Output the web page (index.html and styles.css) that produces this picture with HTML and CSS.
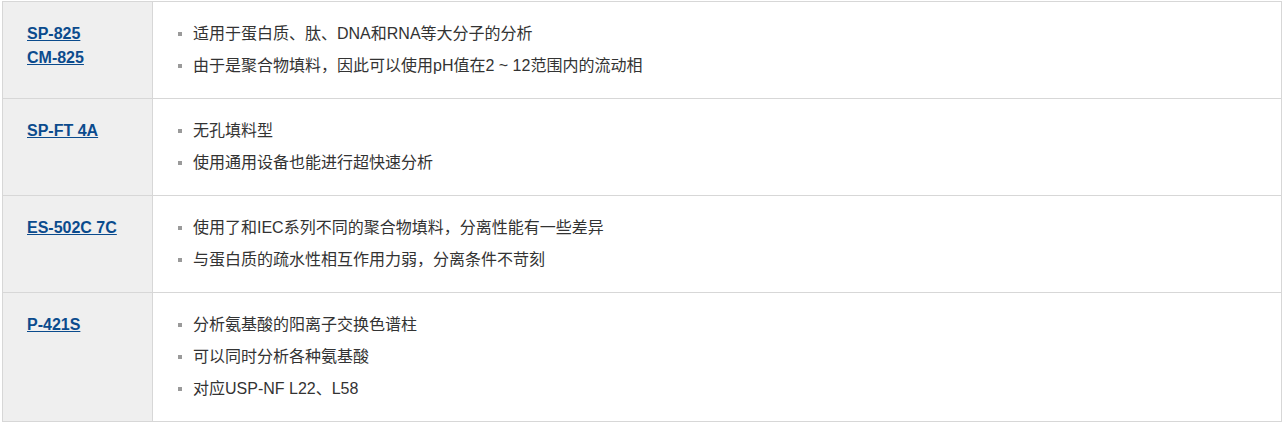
FILE: index.html
```html
<!DOCTYPE html>
<html lang="zh-CN">
<head>
<meta charset="utf-8">
<title>Columns</title>
<link rel="stylesheet" href="styles.css">
</head>
<body>
<div class="spec-table">
  <div class="name-cell">
    <a class="model" href="#">SP-825</a><br>
    <a class="model" href="#">CM-825</a>
  </div>
  <div class="desc-cell">
    <ul class="features">
      <li>适用于蛋白质、肽、DNA和RNA等大分子的分析</li>
      <li>由于是聚合物填料，因此可以使用pH值在2 ~ 12范围内的流动相</li>
    </ul>
  </div>

  <div class="name-cell">
    <a class="model" href="#">SP-FT 4A</a>
  </div>
  <div class="desc-cell">
    <ul class="features">
      <li>无孔填料型</li>
      <li>使用通用设备也能进行超快速分析</li>
    </ul>
  </div>

  <div class="name-cell">
    <a class="model" href="#">ES-502C 7C</a>
  </div>
  <div class="desc-cell">
    <ul class="features">
      <li>使用了和IEC系列不同的聚合物填料，分离性能有一些差异</li>
      <li>与蛋白质的疏水性相互作用力弱，分离条件不苛刻</li>
    </ul>
  </div>

  <div class="name-cell">
    <a class="model" href="#">P-421S</a>
  </div>
  <div class="desc-cell">
    <ul class="features">
      <li>分析氨基酸的阳离子交换色谱柱</li>
      <li>可以同时分析各种氨基酸</li>
      <li>对应USP-NF L22、L58</li>
    </ul>
  </div>
</div>
</body>
</html>
```

FILE: styles.css
```css
html, body {
  margin: 0;
  padding: 0;
  background: #ffffff;
}

body {
  padding: 1px 2px;
  font-family: "Liberation Sans", "Noto Sans CJK SC", sans-serif;
  color: #333333;
}

.spec-table {
  width: 1280px;
  box-sizing: border-box;
  display: grid;
  grid-template-columns: 150px 1129px;
  border-top: 1px solid #d7d7d7;
  border-left: 1px solid #d7d7d7;
}

.name-cell,
.desc-cell {
  box-sizing: border-box;
  border-right: 1px solid #d7d7d7;
  border-bottom: 1px solid #d7d7d7;
}

.name-cell {
  background: #efefef;
  padding: 20px 0 0 24px;
  font-size: 16px;
  line-height: 24px;
  font-weight: bold;
}

.model {
  color: #0b4b8d;
  text-decoration: underline;
}

.desc-cell {
  padding: 16px 0 16px 0;
}

.features {
  list-style: none;
  margin: 0;
  padding: 0 0 0 40px;
  font-size: 16px;
  line-height: 32px;
}

.features li {
  position: relative;
}

.features li::before {
  content: "";
  position: absolute;
  left: -15px;
  top: 14px;
  width: 4px;
  height: 4px;
  background: #9a9a9a;
}
```
